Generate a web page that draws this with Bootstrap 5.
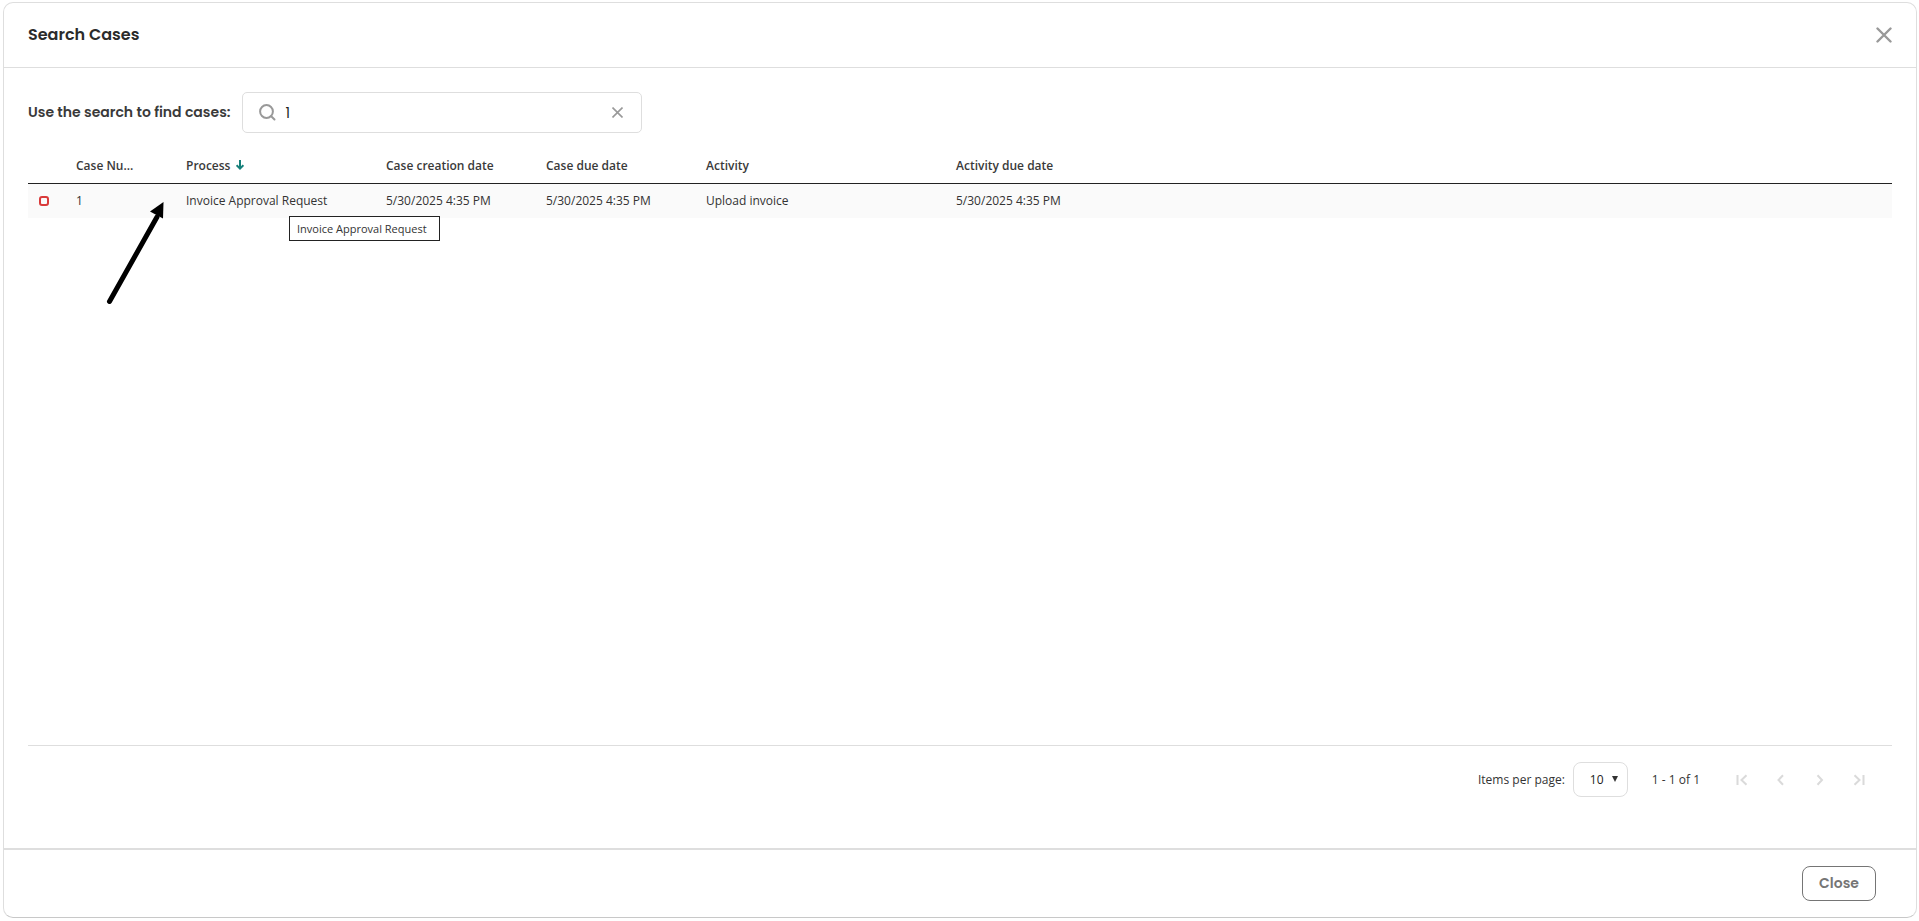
<!DOCTYPE html>
<html lang="en">
<head>
<meta charset="utf-8">
<meta name="viewport" content="width=device-width, initial-scale=1">
<title>Search Cases</title>
<link href="https://cdn.jsdelivr.net/npm/bootstrap@5.3.0/dist/css/bootstrap.min.css" rel="stylesheet">
<style>
  body { font-family: "Open Sans", sans-serif; font-size: 12px; line-height: 16px; color: #333; background: #fff; }
  .title-font { font-family: Poppins, Inter, sans-serif; font-weight: 600; }
  .page { min-height: 100vh; padding: 2px 2px 3px 3px; }
  .dialog-box { border: 1px solid #dedede; border-bottom-color: #c8c8c8; border-radius: 10px; }
  .dialog-head { padding: 20px 24px; border-bottom: 1px solid #dedede; }
  .dialog-head h1 { font-size: 16px; line-height: 24px; color: #2b2b2b; }
  .dialog-main { padding: 24px 24px 51px; }
  .dialog-foot { padding: 16px 40px; border-top: 2px solid #dedede; }
  .plain-btn { border: 0; padding: 0; background: none; line-height: 0; color: #999; }
  .plain-btn:disabled { color: #dadada; }
  .search-label { font-size: 14px; line-height: 20px; padding-bottom: 2px; color: #3a3a3a; }
  .search-box { width: 400px; height: 41px; padding: 0 18px 0 16px; border: 1px solid #dedede; border-radius: 5px; color: #999; }
  .search-box input { border: 0; outline: 0; background: none; font-size: 14px; color: #222; min-width: 0; padding: 0 0 0 1px; }
  .cases { table-layout: fixed; }
  .cases > thead > tr > th { padding: 9px 10px; font-weight: 600; color: #3a3a3a; border-bottom: 1px solid #222; white-space: nowrap; }
  .cases > tbody > tr > td { padding: 9px 10px; border: 0; background: #fafafa; color: #333; }
  .c-state { width: 38px; } .c-num { width: 110px; } .c-proc { width: 200px; } .c-date { width: 160px; } .c-act { width: 250px; }
  .state { width: 10px; height: 10px; border: 2px solid #d93a3a; border-radius: 3px; margin-left: 1px; }
  .sort { margin-left: 2px; vertical-align: baseline; }
  .hint { left: 113px; top: 32px; padding: 4px 12px 3px 7px; border: 1px solid #222; background: #fff; font-size: 11px; white-space: nowrap; }
  .pointer { left: 38px; top: 16px; z-index: 2; }
  .pager { padding-top: 16px; border-top: 1px solid #dedede; }
  .select-wrap select { appearance: none; width: 55px; height: 35px; border: 1px solid #dedede; border-radius: 8px; padding: 0 16px; background: #fff; color: #222; font-weight: 500; }
  .select-wrap svg { right: 10px; top: 14px; pointer-events: none; }
  .pager-nav { gap: 19px; margin: 0 23px 0 24px; }
  .btn-close-dialog { width: 74px; height: 35px; padding: 0; border: 1px solid #757575; border-radius: 8px; font-size: 14px; color: #757575; }
</style>
</head>
<body>
<div class="page d-flex">
  <div class="dialog-box d-flex flex-column flex-grow-1" role="dialog" aria-labelledby="dlg-title">
    <header class="dialog-head d-flex align-items-center justify-content-between">
      <h1 id="dlg-title" class="title-font m-0">Search Cases</h1>
      <button class="plain-btn" type="button" aria-label="Close dialog">
        <svg width="16" height="16" viewBox="0 0 16 16" fill="none" stroke="currentColor" stroke-width="2.4" stroke-linecap="round"><path d="M1.500 1.500l13 13M14.500 1.500l-13 13"/></svg>
      </button>
    </header>
    <main class="dialog-main d-flex flex-column flex-grow-1">
      <div class="d-flex align-items-center mb-3">
        <label for="case-search" class="search-label title-font me-2 pe-1">Use the search to find cases:</label>
        <div class="search-box d-flex align-items-center">
          <svg class="me-2" width="17" height="17" viewBox="0 0 17 17" fill="none" stroke="currentColor" stroke-width="2" stroke-linecap="round"><circle cx="7.500" cy="7.500" r="6.400"/><path d="M12.200 12.200L15.500 15.500"/></svg>
          <input id="case-search" class="flex-grow-1 title-font fw-normal" type="text" value="1">
          <button class="plain-btn" type="button" aria-label="Clear search">
            <svg width="11" height="11" viewBox="0 0 11 11" fill="none" stroke="currentColor" stroke-width="1.600"><path d="M.5.5l10 10M10.500.5l-10 10"/></svg>
          </button>
        </div>
      </div>
      <table class="table cases mb-0">
        <colgroup><col class="c-state"><col class="c-num"><col class="c-proc"><col class="c-date"><col class="c-date"><col class="c-act"><col></colgroup>
        <thead>
          <tr>
            <th></th>
            <th scope="col">Case Nu...</th>
            <th scope="col">Process
              <svg class="sort" width="8" height="10" viewBox="0 0 8 10" fill="none" stroke="#16807a" stroke-width="2"><path d="M4 0v9M.6 5.200L4 8.600l3.400-3.400"/></svg>
            </th>
            <th scope="col">Case creation date</th>
            <th scope="col">Case due date</th>
            <th scope="col">Activity</th>
            <th scope="col">Activity due date</th>
          </tr>
        </thead>
        <tbody>
          <tr>
            <td class="align-middle"><div class="state"></div></td>
            <td class="position-relative">1
              <svg class="pointer position-absolute" width="64" height="108" viewBox="0 0 64 108"><path d="M5.500 101.500L53 17" stroke="#000" stroke-width="5" stroke-linecap="round"/><path d="M59.500 2L46 11.500L59 18.500z"/></svg>
            </td>
            <td class="position-relative">Invoice Approval Request
              <div class="hint position-absolute" role="tooltip">Invoice Approval Request</div>
            </td>
            <td>5/30/2025 4:35 PM</td>
            <td>5/30/2025 4:35 PM</td>
            <td>Upload invoice</td>
            <td>5/30/2025 4:35 PM</td>
          </tr>
        </tbody>
      </table>
      <div class="pager d-flex align-items-center justify-content-end mt-auto">
        <label for="page-size" class="me-2">Items per page:</label>
        <div class="select-wrap position-relative me-4">
          <select id="page-size"><option>10</option></select>
          <svg class="position-absolute" width="6" height="6" viewBox="0 0 6 6"><path d="M0 0h6L3 6z" fill="#333"/></svg>
        </div>
        <span class="me-2">1 - 1 of 1</span>
        <div class="pager-nav d-flex">
          <button class="plain-btn" type="button" disabled aria-label="First page"><svg width="20" height="20" viewBox="0 0 20 20" fill="none" stroke="currentColor" stroke-width="2"><path d="M5.500 5v10M14.500 5.300L9.500 10l5 4.700"/></svg></button>
          <button class="plain-btn" type="button" disabled aria-label="Previous page"><svg width="20" height="20" viewBox="0 0 20 20" fill="none" stroke="currentColor" stroke-width="2"><path d="M12 5.300L7.500 10l4.500 4.700"/></svg></button>
          <button class="plain-btn" type="button" disabled aria-label="Next page"><svg width="20" height="20" viewBox="0 0 20 20" fill="none" stroke="currentColor" stroke-width="2"><path d="M7.500 5.300L12 10l-4.500 4.700"/></svg></button>
          <button class="plain-btn" type="button" disabled aria-label="Last page"><svg width="20" height="20" viewBox="0 0 20 20" fill="none" stroke="currentColor" stroke-width="2"><path d="M14.500 5v10M5.500 5.300l5 4.700-5 4.700"/></svg></button>
        </div>
      </div>
    </main>
    <footer class="dialog-foot d-flex justify-content-end">
      <button class="btn btn-close-dialog title-font" type="button">Close</button>
    </footer>
  </div>
</div>
<script src="https://cdn.jsdelivr.net/npm/bootstrap@5.3.0/dist/js/bootstrap.bundle.min.js"></script>
</body>
</html>
